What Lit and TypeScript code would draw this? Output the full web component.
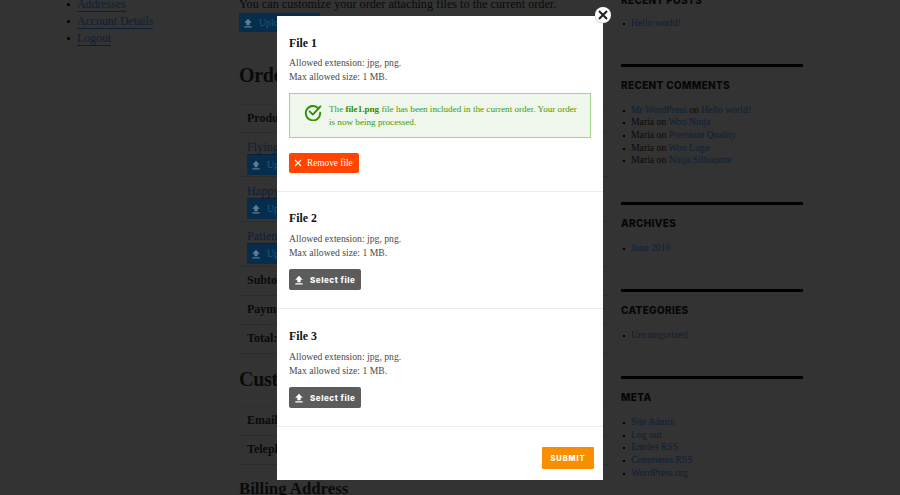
import { LitElement, html, css, svg } from "lit";
import { customElement } from "lit/decorators.js";

const upload = svg`<svg class="up" viewBox="0 0 12 12" width="10" height="10"><path d="M6 1 L10.5 5.6 H8 V8.6 H4 V5.6 H1.5 Z M1.6 10 H10.4 V11.4 H1.6 Z" fill="currentColor"/></svg>`;

@customElement("app-root")
export class AppRoot extends LitElement {
  static styles = css`
    :host { display: block; width: 900px; height: 495px; position: relative; overflow: hidden; background: #333; font-family: "Liberation Serif", serif; }
    .page { display: grid; grid-template-columns: 239px 382px 182px; height: 495px; overflow: hidden; color: #0a0a0a; }
    a { color: #0c1f36; text-decoration: none; }
    .nav { margin: -4px 0 0; padding: 0 0 0 77px; list-style: none; font-size: 11.8px; line-height: 17px; }
    .nav li, .side li { position: relative; }
    .nav li::before { content: ""; position: absolute; left: -10px; top: 7px; width: 3px; height: 3px; border-radius: 50%; background: #000; }
    .nav a { border-bottom: 1px solid #0c1f36; }
    .main { margin-top: -4px; width: 370px; }
    .lead { font-size: 12.2px; line-height: 17px; white-space: nowrap; }
    .ubtn { display: flex; align-items: center; gap: 6px; width: 81px; height: 19px; box-sizing: border-box; padding-left: 2px; background: #062d4b; color: #185a82; font-size: 9.8px; }
    .ubtn .up { color: #5d7d92; margin-left: 2px; }
    h2 { font-size: 20px; letter-spacing: -0.3px; line-height: 30px; margin: 0; font-weight: 700; }
    .h2a { margin-top: 28px; }
    .h2b { margin-top: 10px; }
    .table { margin-top: 14px; border-top: 1px solid #2f2f2f; }
    .table.t2 { margin-top: 12px; }
    .row { box-sizing: border-box; border-bottom: 1px solid #2c2c2c; padding: 0 8px; height: 29px; display: flex; align-items: center; font-weight: 700; font-size: 12px; white-space: nowrap; }
    .row.p { display: block; height: 44.7px; padding-top: 6px; font-weight: 400; font-size: 12.2px; line-height: 16px; }
    .row.p a { border-bottom: 1px solid #0c1f36; }
    .row.p .ubtn { height: 20px; }
    .row.first { height: 27.7px; }
    h3 { font-size: 16.8px; line-height: 24px; margin: 12px 0 0; white-space: nowrap; }
    .side { margin-top: -8.5px; }
    .widget { margin-bottom: 34.5px; }
    .widget.bar { border-top: 3px solid #000; padding-top: 10px; }
    h4 { font: 800 10px/16px Inter, sans-serif; letter-spacing: 0.33px; text-transform: uppercase; margin: 0; color: #060606; }
    .side ul { list-style: none; margin: 11px 0 0; padding: 0 0 0 10px; font-size: 9.7px; line-height: 12.67px; white-space: nowrap; }
    .first-w ul { margin-top: 9px; }
    .side li::before { content: ""; position: absolute; left: -8px; top: 6px; width: 2px; height: 2px; background: #000; }
    .scrim-modal { position: absolute; left: 277px; top: 16px; width: 326px; height: 464px; background: #fff; color: #444; display: flex; flex-direction: column; }
    .sec { padding: 18px 12px; border-bottom: 1px solid #ececec; }
    .sec.one { padding-top: 19px; }
    .sec.three { padding-top: 19px; }
    .title { font-size: 11.8px; line-height: 16px; font-weight: 700; color: #111; }
    .info { margin-top: 6px; font-size: 9.7px; line-height: 14px; color: #4a4a4a; }
    .one .info { margin-top: 5px; }
    .alert { margin-top: 9px; height: 45px; box-sizing: border-box; border: 1px solid #a3d48f; background: #eff7ec; display: flex; align-items: flex-start; gap: 7px; padding: 8.5px 8px 0 14px; color: #3f9a05; font-size: 9.15px; line-height: 13px; }
    .alert svg { flex: none; }
    .alert b { color: #358a00; }
    .rm { margin-top: 15px; width: 70px; height: 20px; border-radius: 2px; background: #ff4500; color: #fff; display: flex; align-items: center; gap: 4px; padding-left: 4px; box-sizing: border-box; font-size: 9.3px; white-space: nowrap; }
    .sel { margin-top: 9px; width: 72px; height: 21px; border-radius: 2px; background: #5c5c5c; color: #fff; display: flex; align-items: center; gap: 6px; padding-left: 5px; box-sizing: border-box; font: 800 8px Inter, sans-serif; letter-spacing: 0.55px; }
    .foot { display: flex; justify-content: flex-end; padding: 20px 9px 0 0; }
    .submit { width: 52px; height: 22px; background: #f98f00; color: #fff; display: flex; align-items: center; justify-content: center; font: 800 7.5px Inter, sans-serif; letter-spacing: 0.9px; border-radius: 1px; }
    .close { position: absolute; left: 595px; top: 7px; width: 16px; height: 16px; border-radius: 50%; background: #fff; display: flex; align-items: center; justify-content: center; box-shadow: 0 0 1px #555; }
  `;

  sec(n: string, cls: string) {
    return html`<div class="sec ${cls}">
      <div class="title">File ${n}</div>
      <div class="info">Allowed extension: jpg, png.<br />Max allowed size: 1 MB.</div>
      <div class="sel">${upload}<span>Select file</span></div>
    </div>`;
  }

  render() {
    return html`
      <div class="page">
        <ul class="nav">
          <li><a>Addresses</a></li>
          <li><a>Account Details</a></li>
          <li><a>Logout</a></li>
        </ul>
        <div class="main">
          <div class="lead">You can customize your order attaching files to the current order.</div>
          <div class="ubtn">${upload}<span>Upload</span></div>
          <h2 class="h2a">Order</h2>
          <div class="table">
            <div class="row first">Product</div>
            <div class="row p"><a>Flying</a><div class="ubtn">${upload}<span>Upload</span></div></div>
            <div class="row p"><a>Happy</a><div class="ubtn">${upload}<span>Upload</span></div></div>
            <div class="row p"><a>Patient</a><div class="ubtn">${upload}<span>Upload</span></div></div>
            <div class="row">Subtotal:</div>
            <div class="row">Payment:</div>
            <div class="row">Total:</div>
          </div>
          <h2 class="h2b">Customer</h2>
          <div class="table t2">
            <div class="row">Email:</div>
            <div class="row">Telephone:</div>
          </div>
          <h3>Billing Address</h3>
        </div>
        <div class="side">
          <div class="widget first-w"><h4>Recent Posts</h4><ul><li><a>Hello world!</a></li></ul></div>
          <div class="widget bar"><h4>Recent Comments</h4><ul>
            <li><a>Mr WordPress</a> on <a>Hello world!</a></li>
            <li>Maria on <a>Woo Ninja</a></li>
            <li>Maria on <a>Premium Quality</a></li>
            <li>Maria on <a>Woo Logo</a></li>
            <li>Maria on <a>Ninja Silhouette</a></li>
          </ul></div>
          <div class="widget bar"><h4>Archives</h4><ul><li><a>June 2016</a></li></ul></div>
          <div class="widget bar"><h4>Categories</h4><ul><li><a>Uncategorized</a></li></ul></div>
          <div class="widget bar"><h4>Meta</h4><ul>
            <li><a>Site Admin</a></li><li><a>Log out</a></li><li><a>Entries RSS</a></li><li><a>Comments RSS</a></li><li><a>WordPress.org</a></li>
          </ul></div>
        </div>
      </div>
      <div class="scrim-modal">
        <div class="sec one">
          <div class="title">File 1</div>
          <div class="info">Allowed extension: jpg, png.<br />Max allowed size: 1 MB.</div>
          <div class="alert">
            <svg width="18" height="18" viewBox="0 0 18 18" fill="none" stroke="#2f8f00" stroke-width="1.9" stroke-linecap="round" stroke-linejoin="round">
              <path d="M14.6 5.6 A7.2 7.2 0 1 0 16.2 9.6" />
              <path d="M5.6 8.4 L8.8 11.6 L16.4 3.4" />
            </svg>
            <div>The <b>file1.png</b> file has been included in the current order. Your order is now being processed.</div>
          </div>
          <div class="rm">
            <svg width="10" height="10" viewBox="0 0 10 10" stroke="#fff" stroke-width="1.1"><path d="M2 2 L8 8 M8 2 L2 8" /></svg>
            <span>Remove file</span>
          </div>
        </div>
        ${this.sec("2", "two")}
        ${this.sec("3", "three")}
        <div class="foot"><div class="submit">SUBMIT</div></div>
      </div>
      <div class="close">
        <svg width="12" height="12" viewBox="0 0 12 12" stroke="#222" stroke-width="2.1"><path d="M2 2 L10 10 M10 2 L2 10" /></svg>
      </div>
    `;
  }
}
